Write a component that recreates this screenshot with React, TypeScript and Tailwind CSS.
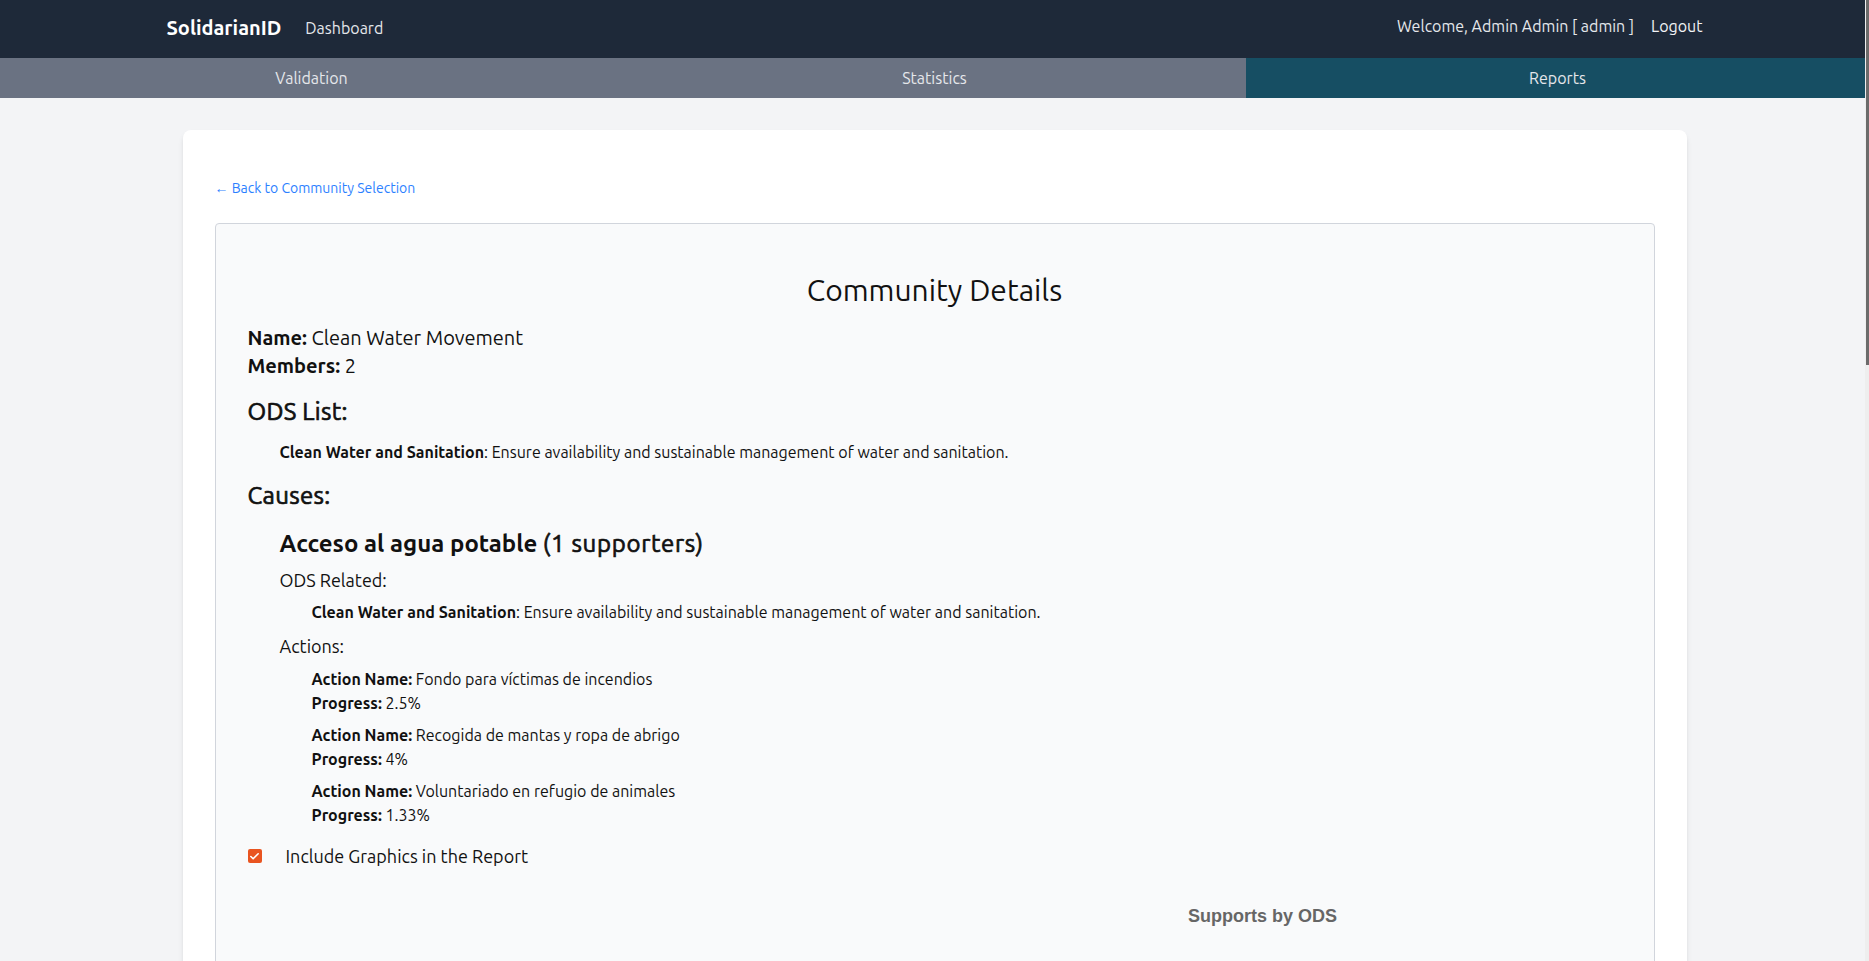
import { Check } from "lucide-react";

const actions = [
  { name: "Fondo para víctimas de incendios", progress: "2.5%" },
  { name: "Recogida de mantas y ropa de abrigo", progress: "4%" },
  { name: "Voluntariado en refugio de animales", progress: "1.33%" },
];

const tabs = [
  { label: "Validation", active: false },
  { label: "Statistics", active: false },
  { label: "Reports", active: true },
];

export default function App() {
  return (
    <div className="relative h-screen overflow-hidden bg-gray-100 font-['Ubuntu','Roboto',sans-serif] text-[#111]">
      <nav className="h-[58px] bg-gray-800">
        <div className="container mx-auto flex h-full items-center justify-between pb-[2px]">
          <div className="flex items-center">
            <span className="text-xl font-bold text-white">SolidarianID</span>
            <a href="#" className="ml-6 text-base text-gray-200">
              Dashboard
            </a>
          </div>
          <div className="mb-[4px] flex items-center gap-[17px] text-base text-gray-200">
            <span>Welcome, Admin Admin [ admin ]</span>
            <a href="#" className="text-gray-100">
              Logout
            </a>
          </div>
        </div>
      </nav>

      <div className="grid h-10 grid-cols-3">
        {tabs.map((t) => (
          <button
            key={t.label}
            className={
              t.active
                ? "flex items-center justify-center bg-[#164e63] text-base text-gray-200"
                : "flex items-center justify-center bg-gray-500 text-base text-gray-200"
            }
          >
            {t.label}
          </button>
        ))}
      </div>

      <main className="container mx-auto px-4 pt-8">
        <div className="rounded-lg bg-white p-8 shadow-md">
          <a href="#" className="mt-4 mb-[25px] block text-sm text-blue-500">
            ← Back to Community Selection
          </a>

          <div className="rounded border border-gray-300 bg-gray-50 p-8">
            <h2 className="mt-4 mb-4 text-center text-3xl">Community Details</h2>
            <p className="text-xl">
              <strong>Name:</strong> Clean Water Movement
            </p>
            <p className="text-xl">
              <strong>Members:</strong> 2
            </p>

            {/* medium weight is not installed, a thin stroke stands in for it */}
            <h3 className="mt-4 text-2xl tracking-[0.3px] [-webkit-text-stroke:0.7px_currentColor]">
              ODS List:
            </h3>
            <ul className="mt-3 pl-8">
              <li>
                <strong>Clean Water and Sanitation</strong>: Ensure availability
                and sustainable management of water and sanitation.
              </li>
            </ul>

            <h3 className="mt-4 text-2xl tracking-[0.3px] [-webkit-text-stroke:0.7px_currentColor]">
              Causes:
            </h3>
            <div className="mt-4 pl-8">
              <h4 className="text-2xl">
                <strong className="font-bold">Acceso al agua potable</strong>{" "}
                <span className="tracking-[0.7px] [-webkit-text-stroke:0.7px_currentColor]">
                  (1 supporters)
                </span>
              </h4>
              <p className="mt-[6px] text-lg">ODS Related:</p>
              <ul className="mt-[6px] pl-8">
                <li>
                  <strong>Clean Water and Sanitation</strong>: Ensure
                  availability and sustainable management of water and
                  sanitation.
                </li>
              </ul>
              <p className="mt-2 text-lg">Actions:</p>
              <ul className="mt-[7px] space-y-2 pl-8">
                {actions.map((a) => (
                  <li key={a.name}>
                    <div>
                      <strong>Action Name:</strong> {a.name}
                    </div>
                    <div>
                      <strong>Progress:</strong> {a.progress}
                    </div>
                  </li>
                ))}
              </ul>
            </div>

            <label className="mt-[15px] flex items-center text-lg">
              <span className="flex h-[14px] w-[14px] items-center justify-center rounded-[2px] bg-[#e95420]">
                <Check className="h-[11px] w-[11px] text-white" strokeWidth={3.5} />
              </span>
              <span className="ml-6">Include Graphics in the Report</span>
            </label>

            <div className="mt-8 flex justify-end">
              <div className="h-[300px] w-[718px]">
                <p className="text-center font-['Liberation_Sans',Arial,sans-serif] text-lg font-bold text-[#666]">
                  Supports by ODS
                </p>
              </div>
            </div>
          </div>
        </div>
      </main>

      <div className="absolute top-0 right-0 h-full w-[4px] bg-[#eeeeee]">
        <div className="ml-[1px] h-[365px] w-[3px] bg-[#6b6b6b]" />
      </div>
    </div>
  );
}
